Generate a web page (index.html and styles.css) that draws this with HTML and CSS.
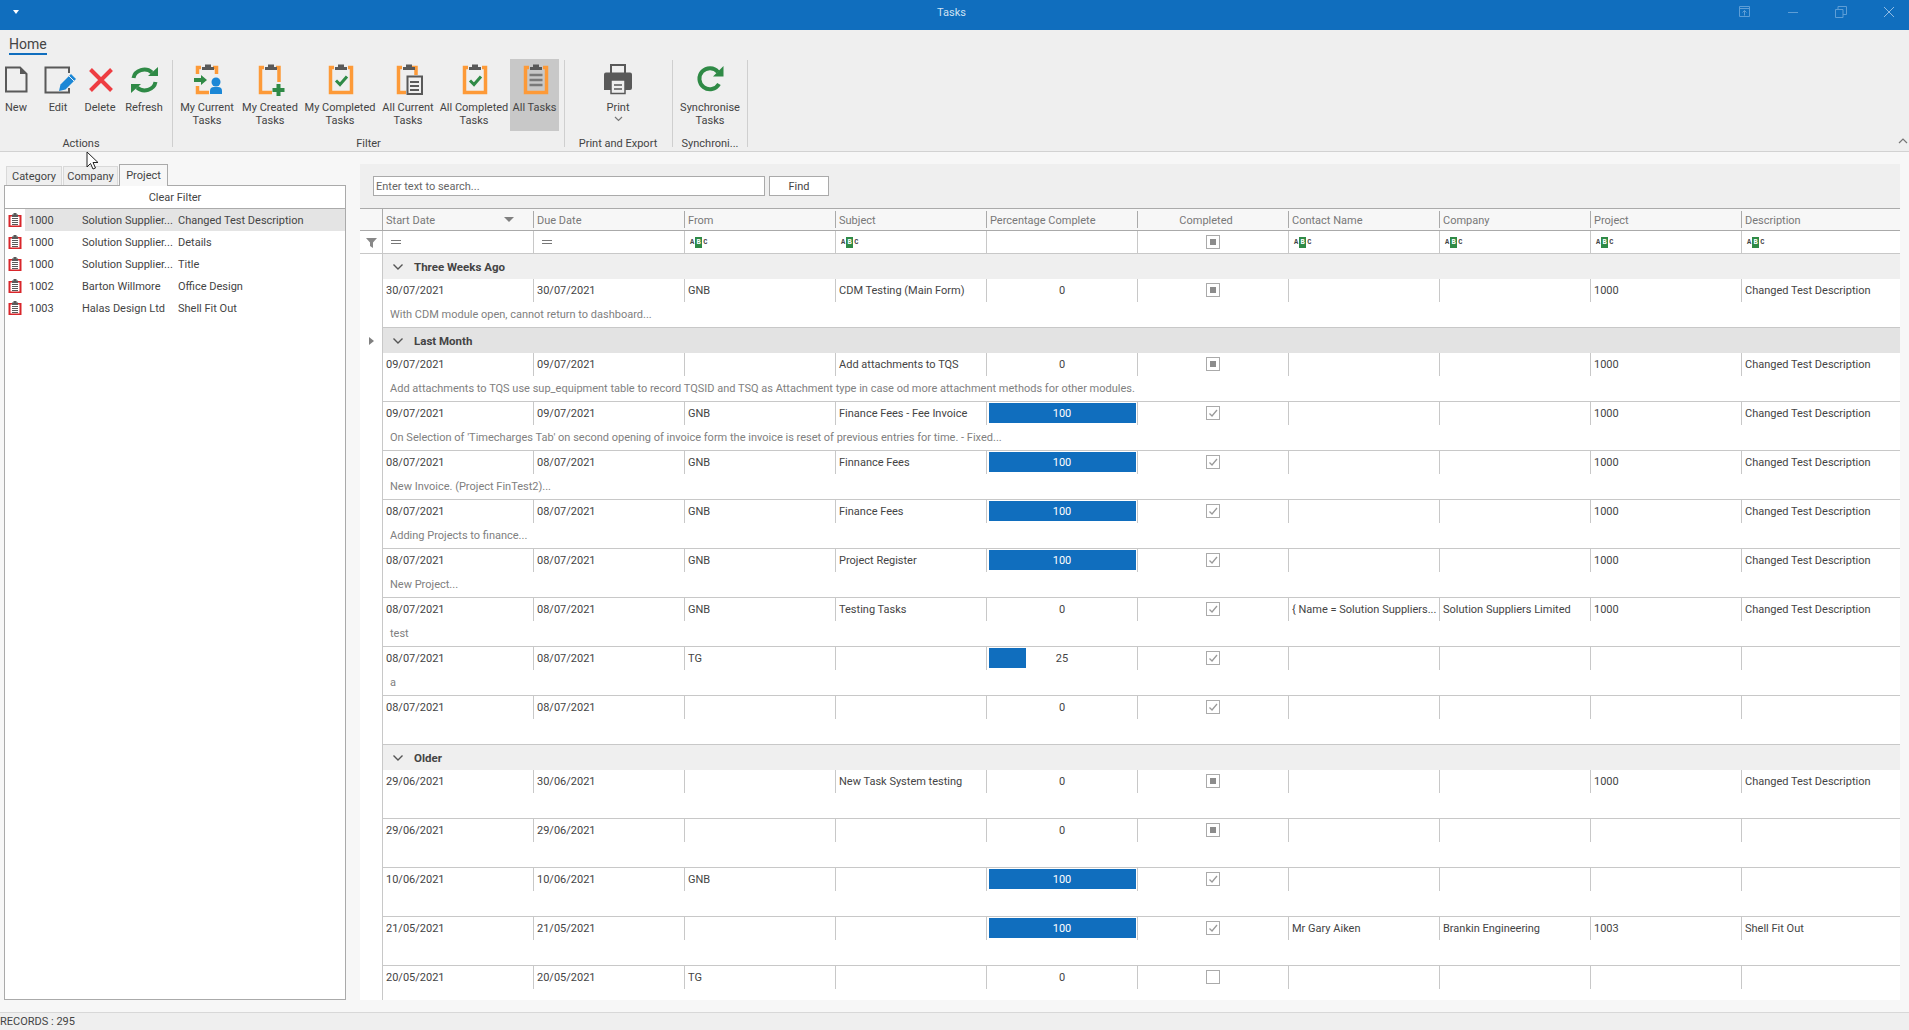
FILE: index.html
```
<!DOCTYPE html>
<html lang="en">
<head>
<meta charset="utf-8">
<title>Tasks</title>
<link rel="stylesheet" href="styles.css">
</head>
<body>
<svg class="defs" width="0" height="0">
  <symbol id="clip" viewBox="0 0 32 32"><path d="M11 7V4h3V1.500h6V4h3v3z" fill="#595959"/></symbol>
  <symbol id="mini" viewBox="0 0 16 16"><path d="M1.500 3H14.500V15H1.500Z" fill="#d9262b"/><path d="M3.500 4.500H12.500V13.500H3.500Z" fill="#fff"/><path d="M5 2.500H6.500V1H9.500V2.500H11V5H5Z" fill="#595959"/><path d="M5 6.500h6M5 8.500h6M5 10.500h6M5 12.500h6" stroke="#595959" stroke-width="1"/></symbol>
  <symbol id="chev" viewBox="0 0 12 12"><path d="M1.500 3.500 6 8 10.500 3.500" fill="none" stroke="#555" stroke-width="1.400"/></symbol>
</svg>

<header class="titlebar">
  <div class="tb-left"><span class="tb-menu"></span></div>
  <div class="tb-title">Tasks</div>
  <div class="tb-right">
    <span class="tb-btn"><svg width="12" height="12" viewBox="0 0 12 12"><path d="M.5.5h10v10H.5zM.5 2.500h10M5.500 9.500V4.500M3.500 6.500l2-2 2 2" fill="none" stroke="#5e9ed6"/></svg></span>
    <span class="tb-btn"><svg width="12" height="12" viewBox="0 0 12 12"><path d="M1 6.500h10" stroke="#5e9ed6"/></svg></span>
    <span class="tb-btn"><svg width="12" height="12" viewBox="0 0 12 12"><path d="M.5 3.500h7.500v8H.5zM3 3.500V.5h8.500v8H8" fill="none" stroke="#5e9ed6"/></svg></span>
    <span class="tb-btn"><svg width="12" height="12" viewBox="0 0 12 12"><path d="M1 1l10 10M11 1 1 11" stroke="#8fbbe4"/></svg></span>
  </div>
</header>

<section class="ribbon">
  <div class="rtabs"><span class="rtab">Home</span></div>
  <div class="rbody">
    <div class="rgroup g-actions">
      <div class="rbtns">
        <div class="rbtn"><svg width="32" height="32" viewBox="0 0 32 32"><path d="M6 4.500H20L26.500 11V28.500H6Z" fill="none" stroke="#595959" stroke-width="2"/><path d="M20 4v7h7z" fill="#595959"/></svg><span>New</span></div>
        <div class="rbtn"><svg width="32" height="32" viewBox="0 0 32 32"><path d="M27 10V4.500H3.500V29.500H27V25" fill="none" stroke="#595959" stroke-width="2"/><path d="M17 28l1.500-6.500L29 11l5 5-10.500 10.500z" fill="#1b87d6"/><path d="M27 13l5 5" stroke="#f0f0f0" stroke-width="1"/></svg><span>Edit</span></div>
        <div class="rbtn"><svg width="32" height="32" viewBox="0 0 32 32"><path d="M6.500 6.500 27.500 27.500M27.500 6.500 6.500 27.500" stroke="#ee3d42" stroke-width="4"/></svg><span>Delete</span></div>
        <div class="rbtn"><svg width="32" height="32" viewBox="0 0 32 32"><path d="M5.500 15A11 10 0 0 1 24 9.500" fill="none" stroke="#2f8a46" stroke-width="4"/><path d="M20 13h10V4z" fill="#2f8a46"/><path d="M27.500 19A11 10 0 0 1 9 24.500" fill="none" stroke="#2f8a46" stroke-width="4"/><path d="M13 21H3v9z" fill="#2f8a46"/></svg><span>Refresh</span></div>
      </div>
      <div class="rlabel">Actions</div>
    </div>
    <div class="rsep"></div>
    <div class="rgroup g-filter">
      <div class="rbtns">
        <div class="rbtn"><svg width="32" height="32" viewBox="0 0 32 32"><path d="M10 4.500H6.500V11M6.500 23V29.500H18M22 4.500H25.500V11" fill="none" stroke="#fd9a38" stroke-width="3.500"/><use href="#clip"/><path d="M3 15h7v-3l6 5-6 5v-3H3z" fill="#2f8a46"/><circle cx="25" cy="19" r="4.500" fill="#1b87d6"/><path d="M19 31v-3a4 4 0 0 1 4-4h4a4 4 0 0 1 4 4v3z" fill="#1b87d6"/></svg><span>My Current<br>Tasks</span></div>
        <div class="rbtn"><svg width="32" height="32" viewBox="0 0 32 32"><path d="M10 4.500H6.500V29.500H18M22 4.500H25V19" fill="none" stroke="#fd9a38" stroke-width="3.500"/><use href="#clip"/><path d="M22.500 21h4v4h4v4h-4v4h-4v-4h-4v-4h4z" fill="#2f8a46"/></svg><span>My Created<br>Tasks</span></div>
        <div class="rbtn"><svg width="32" height="32" viewBox="0 0 32 32"><path d="M10 4.500H6.500V29.500H27.500V4.500H24" fill="none" stroke="#fd9a38" stroke-width="3.500"/><use href="#clip"/><path d="M12 17.500l4 4 7-8" fill="none" stroke="#2f8a46" stroke-width="3"/></svg><span>My Completed<br>Tasks</span></div>
        <div class="rbtn"><svg width="32" height="32" viewBox="0 0 32 32"><path d="M10 4.500H6.500V29.500H14M20 4.500H24V12" fill="none" stroke="#fd9a38" stroke-width="3.500"/><use href="#clip"/><path d="M15.500 13.500H30V31H15.500Z" fill="#efefef" stroke="#595959" stroke-width="2"/><path d="M18 19h9M18 23h9M18 27h9" stroke="#595959" stroke-width="2"/></svg><span>All Current<br>Tasks</span></div>
        <div class="rbtn"><svg width="32" height="32" viewBox="0 0 32 32"><path d="M10 4.500H6.500V29.500H27.500V4.500H24" fill="none" stroke="#fd9a38" stroke-width="3.500"/><use href="#clip"/><path d="M12 17.500l4 4 7-8" fill="none" stroke="#2f8a46" stroke-width="3"/></svg><span>All Completed<br>Tasks</span></div>
        <div class="rbtn active"><svg width="32" height="32" viewBox="0 0 32 32"><path d="M10 4.500H6.500V29.500H27.500V4.500H24" fill="none" stroke="#fd9a38" stroke-width="3.500"/><use href="#clip"/><path d="M10.500 12h13M10.500 17h13M10.500 22h13" stroke="#7a7a7a" stroke-width="2.500"/></svg><span>All Tasks</span></div>
      </div>
      <div class="rlabel">Filter</div>
    </div>
    <div class="rsep"></div>
    <div class="rgroup g-print">
      <div class="rbtns">
        <div class="rbtn"><svg width="32" height="32" viewBox="0 0 32 32"><path d="M9 10V2h14v8" fill="none" stroke="#595959" stroke-width="2"/><path d="M4 9.500H28A2 2 0 0 1 30 11.500V25a2 2 0 0 1-2 2H2V11.500A2 2 0 0 1 4 9.500Z" fill="#595959"/><path d="M9 17H23V30.500H9Z" fill="#efefef" stroke="#595959" stroke-width="1.500"/><path d="M12 22h8M12 26h8" stroke="#595959" stroke-width="1.500"/></svg><span>Print</span><svg class="dd" width="9" height="6" viewBox="0 0 9 6"><path d="M1 1l3.500 3.500L8 1" fill="none" stroke="#777" stroke-width="1.200"/></svg></div>
      </div>
      <div class="rlabel">Print and Export</div>
    </div>
    <div class="rsep"></div>
    <div class="rgroup g-sync">
      <div class="rbtns">
        <div class="rbtn"><svg width="32" height="32" viewBox="0 0 32 32"><path d="M25 21A10.500 10.500 0 1 1 24 9" fill="none" stroke="#2f8a46" stroke-width="4"/><path d="M19 13.500H29.500V3z" fill="#2f8a46"/></svg><span>Synchronise<br>Tasks</span></div>
      </div>
      <div class="rlabel">Synchroni...</div>
    </div>
    <div class="rsep"></div>
    <svg class="rcollapse" width="10" height="6" viewBox="0 0 10 6"><path d="M1 5l4-4 4 4" fill="none" stroke="#777" stroke-width="1.200"/></svg>
  </div>
</section>

<main class="content">
  <aside class="side">
    <div class="stabs">
      <span class="stab t-cat">Category</span>
      <span class="stab t-com">Company</span>
      <span class="stab on">Project</span>
    </div>
    <div class="spanel">
      <div class="clear">Clear Filter</div>
      <div class="srow sel"><svg width="16" height="16"><use href="#mini"/></svg><span class="s-id">1000</span><span class="s-name">Solution Supplier...</span><span class="s-desc">Changed Test Description</span></div>
      <div class="srow"><svg width="16" height="16"><use href="#mini"/></svg><span class="s-id">1000</span><span class="s-name">Solution Supplier...</span><span class="s-desc">Details</span></div>
      <div class="srow"><svg width="16" height="16"><use href="#mini"/></svg><span class="s-id">1000</span><span class="s-name">Solution Supplier...</span><span class="s-desc">Title</span></div>
      <div class="srow"><svg width="16" height="16"><use href="#mini"/></svg><span class="s-id">1002</span><span class="s-name">Barton Willmore</span><span class="s-desc">Office Design</span></div>
      <div class="srow"><svg width="16" height="16"><use href="#mini"/></svg><span class="s-id">1003</span><span class="s-name">Halas Design Ltd</span><span class="s-desc">Shell Fit Out</span></div>
    </div>
  </aside>

  <section class="gridwrap">
    <div class="search">
      <div class="sinput">Enter text to search...</div>
      <div class="sfind">Find</div>
    </div>
    <div class="grid">
      <div class="ghead">
        <div class="gut"></div>
        <div class="hc sorted">Start Date<span class="sort"></span></div>
        <div class="hc">Due Date</div>
        <div class="hc">From</div>
        <div class="hc">Subject</div>
        <div class="hc">Percentage Complete</div>
        <div class="hc mid">Completed</div>
        <div class="hc">Contact Name</div>
        <div class="hc">Company</div>
        <div class="hc">Project</div>
        <div class="hc last">Description</div>
      </div>
      <div class="gfilter">
        <div class="gut"><svg width="11" height="11" viewBox="0 0 11 11"><path d="M0 1h11L7 5.500V11L4 9V5.500z" fill="#888"/></svg></div>
        <div class="fc"><span class="eq"></span></div>
        <div class="fc"><span class="eq"></span></div>
        <div class="fc"><span class="abc">A<b>B</b>C</span></div>
        <div class="fc"><span class="abc">A<b>B</b>C</span></div>
        <div class="fc"></div>
        <div class="fc mid"><span class="cb ind"></span></div>
        <div class="fc"><span class="abc">A<b>B</b>C</span></div>
        <div class="fc"><span class="abc">A<b>B</b>C</span></div>
        <div class="fc"><span class="abc">A<b>B</b>C</span></div>
        <div class="fc last"><span class="abc">A<b>B</b>C</span></div>
      </div>

      <div class="gbody">
        <div class="grp"><div class="gut"></div><div class="grp-in"><svg width="12" height="12"><use href="#chev"/></svg>Three Weeks Ago</div></div>
        <div class="row">
          <div class="gut"></div>
          <div class="c">30/07/2021</div><div class="c">30/07/2021</div><div class="c">GNB</div><div class="c">CDM Testing (Main Form)</div>
          <div class="c pct"><span class="n">0</span></div><div class="c mid"><span class="cb ind"></span></div>
          <div class="c"></div><div class="c"></div><div class="c">1000</div><div class="c last">Changed Test Description</div>
          <div class="pv">With CDM module open, cannot return to dashboard...</div>
        </div>

        <div class="grp cur"><div class="gut"><span class="ind-tri"></span></div><div class="grp-in"><svg width="12" height="12"><use href="#chev"/></svg>Last Month</div></div>
        <div class="row">
          <div class="gut"></div>
          <div class="c">09/07/2021</div><div class="c">09/07/2021</div><div class="c"></div><div class="c">Add attachments to TQS</div>
          <div class="c pct"><span class="n">0</span></div><div class="c mid"><span class="cb ind"></span></div>
          <div class="c"></div><div class="c"></div><div class="c">1000</div><div class="c last">Changed Test Description</div>
          <div class="pv">Add attachments to TQS use sup_equipment table to record TQSID and TSQ as Attachment type in case od more attachment methods for other modules.</div>
        </div>
        <div class="row">
          <div class="gut"></div>
          <div class="c">09/07/2021</div><div class="c">09/07/2021</div><div class="c">GNB</div><div class="c">Finance Fees - Fee Invoice</div>
          <div class="c pct"><span class="fill" style="width:100%"></span><span class="n w">100</span></div><div class="c mid"><span class="cb chk"></span></div>
          <div class="c"></div><div class="c"></div><div class="c">1000</div><div class="c last">Changed Test Description</div>
          <div class="pv">On Selection of 'Timecharges Tab' on second opening of invoice form the invoice is reset of previous entries for time. - Fixed...</div>
        </div>
        <div class="row">
          <div class="gut"></div>
          <div class="c">08/07/2021</div><div class="c">08/07/2021</div><div class="c">GNB</div><div class="c">Finnance Fees</div>
          <div class="c pct"><span class="fill" style="width:100%"></span><span class="n w">100</span></div><div class="c mid"><span class="cb chk"></span></div>
          <div class="c"></div><div class="c"></div><div class="c">1000</div><div class="c last">Changed Test Description</div>
          <div class="pv">New Invoice. (Project FinTest2)...</div>
        </div>
        <div class="row">
          <div class="gut"></div>
          <div class="c">08/07/2021</div><div class="c">08/07/2021</div><div class="c">GNB</div><div class="c">Finance Fees</div>
          <div class="c pct"><span class="fill" style="width:100%"></span><span class="n w">100</span></div><div class="c mid"><span class="cb chk"></span></div>
          <div class="c"></div><div class="c"></div><div class="c">1000</div><div class="c last">Changed Test Description</div>
          <div class="pv">Adding Projects to finance...</div>
        </div>
        <div class="row">
          <div class="gut"></div>
          <div class="c">08/07/2021</div><div class="c">08/07/2021</div><div class="c">GNB</div><div class="c">Project Register</div>
          <div class="c pct"><span class="fill" style="width:100%"></span><span class="n w">100</span></div><div class="c mid"><span class="cb chk"></span></div>
          <div class="c"></div><div class="c"></div><div class="c">1000</div><div class="c last">Changed Test Description</div>
          <div class="pv">New Project...</div>
        </div>
        <div class="row">
          <div class="gut"></div>
          <div class="c">08/07/2021</div><div class="c">08/07/2021</div><div class="c">GNB</div><div class="c">Testing Tasks</div>
          <div class="c pct"><span class="n">0</span></div><div class="c mid"><span class="cb chk"></span></div>
          <div class="c">{ Name = Solution Suppliers...</div><div class="c">Solution Suppliers Limited</div><div class="c">1000</div><div class="c last">Changed Test Description</div>
          <div class="pv">test</div>
        </div>
        <div class="row">
          <div class="gut"></div>
          <div class="c">08/07/2021</div><div class="c">08/07/2021</div><div class="c">TG</div><div class="c"></div>
          <div class="c pct"><span class="fill" style="width:25%"></span><span class="n">25</span></div><div class="c mid"><span class="cb chk"></span></div>
          <div class="c"></div><div class="c"></div><div class="c"></div><div class="c last"></div>
          <div class="pv">a</div>
        </div>
        <div class="row">
          <div class="gut"></div>
          <div class="c">08/07/2021</div><div class="c">08/07/2021</div><div class="c"></div><div class="c"></div>
          <div class="c pct"><span class="n">0</span></div><div class="c mid"><span class="cb chk"></span></div>
          <div class="c"></div><div class="c"></div><div class="c"></div><div class="c last"></div>
          <div class="pv"></div>
        </div>

        <div class="grp"><div class="gut"></div><div class="grp-in"><svg width="12" height="12"><use href="#chev"/></svg>Older</div></div>
        <div class="row">
          <div class="gut"></div>
          <div class="c">29/06/2021</div><div class="c">30/06/2021</div><div class="c"></div><div class="c">New Task System testing</div>
          <div class="c pct"><span class="n">0</span></div><div class="c mid"><span class="cb ind"></span></div>
          <div class="c"></div><div class="c"></div><div class="c">1000</div><div class="c last">Changed Test Description</div>
          <div class="pv"></div>
        </div>
        <div class="row">
          <div class="gut"></div>
          <div class="c">29/06/2021</div><div class="c">29/06/2021</div><div class="c"></div><div class="c"></div>
          <div class="c pct"><span class="n">0</span></div><div class="c mid"><span class="cb ind"></span></div>
          <div class="c"></div><div class="c"></div><div class="c"></div><div class="c last"></div>
          <div class="pv"></div>
        </div>
        <div class="row">
          <div class="gut"></div>
          <div class="c">10/06/2021</div><div class="c">10/06/2021</div><div class="c">GNB</div><div class="c"></div>
          <div class="c pct"><span class="fill" style="width:100%"></span><span class="n w">100</span></div><div class="c mid"><span class="cb chk"></span></div>
          <div class="c"></div><div class="c"></div><div class="c"></div><div class="c last"></div>
          <div class="pv"></div>
        </div>
        <div class="row">
          <div class="gut"></div>
          <div class="c">21/05/2021</div><div class="c">21/05/2021</div><div class="c"></div><div class="c"></div>
          <div class="c pct"><span class="fill" style="width:100%"></span><span class="n w">100</span></div><div class="c mid"><span class="cb chk"></span></div>
          <div class="c">Mr Gary Aiken</div><div class="c">Brankin Engineering</div><div class="c">1003</div><div class="c last">Shell Fit Out</div>
          <div class="pv"></div>
        </div>
        <div class="row">
          <div class="gut"></div>
          <div class="c">20/05/2021</div><div class="c">20/05/2021</div><div class="c">TG</div><div class="c"></div>
          <div class="c pct"><span class="n">0</span></div><div class="c mid"><span class="cb"></span></div>
          <div class="c"></div><div class="c"></div><div class="c"></div><div class="c last"></div>
          <div class="pv"></div>
        </div>
      </div>
    </div>
  </section>
</main>

<footer class="status">RECORDS : 295</footer>

<svg class="cursor" width="14" height="20" viewBox="0 0 14 20"><path d="M1 1v15l3.500-3.500L7 18l2.500-1-2.500-5.500h5z" fill="#fff" stroke="#222"/></svg>
</body>
</html>
```

FILE: styles.css
```
* { box-sizing: border-box; }
html, body { margin: 0; padding: 0; height: 100%; overflow: hidden; }
body {
  width: 1909px;
  height: 1030px;
  display: flex;
  flex-direction: column;
  background: #f7f7f7;
  color: #444;
  font: 11px/16px Roboto, "Noto Sans", sans-serif;
}
.defs { display: block; width: 0; height: 0; }

/* title bar */
.titlebar {
  flex: 0 0 30px;
  display: grid;
  grid-template-columns: 1fr auto 1fr;
  background: #106ebe;
  color: #cfe2f3;
}
.tb-left { display: flex; align-items: center; padding: 0 0 6px 13px; }
.tb-menu { width: 0; height: 0; border: 3px solid transparent; border-top: 4px solid #fff; border-bottom: 0; }
.tb-title { line-height: 26px; padding-right: 6px; }
.tb-right { display: flex; justify-content: flex-end; margin-right: -4px; }
.tb-btn { width: 48px; height: 24px; display: flex; align-items: center; justify-content: center; }

/* ribbon */
.ribbon { flex: 0 0 122px; background: #efefef; border-bottom: 1px solid #d2d2d2; }
.rtabs { height: 29px; padding: 6px 0 0 9px; }
.rtab { display: inline-block; height: 19px; font-size: 14px; line-height: 17px; border-bottom: 2px solid #106ebe; color: #444; }
.rbody { display: flex; align-items: flex-start; height: 92px; }
.rgroup { display: flex; flex-direction: column; }
.rbtns { display: grid; height: 72px; }
.g-actions { width: 172px; }
.g-actions .rbtns { grid-template-columns: 32px 52px 32px 56px; }
.g-actions .rlabel { padding-right: 10px; }
.g-filter { width: 391px; }
.g-filter .rbtns { padding-left: 3px; grid-template-columns: 62px 64px 76px 60px 72px 49px; }
.g-print { width: 107px; }
.g-print .rbtns { padding-right: 1px; grid-template-columns: 1fr; }
.g-print .rlabel { padding-right: 1px; }
.g-sync { width: 74px; }
.g-sync .rbtns { grid-template-columns: 1fr; }
.rbtn {
  display: flex;
  flex-direction: column;
  align-items: center;
  padding-top: 4px;
  text-align: center;
  line-height: 13px;
  white-space: nowrap;
  min-width: 0;
}
.rbtn > span { margin-top: 6px; }
.rbtn.active { background: #c8c8c8; }
.rbtn svg { flex: none; overflow: visible; }
.rbtn .dd { margin-top: 2px; }
.rlabel { padding-top: 5px; height: 20px; text-align: center; white-space: nowrap; line-height: 16px; }
.rsep { flex: none; width: 1px; height: 87px; margin: 1px 0 0; background: #cfcfcf; }
.rcollapse { margin: 79px 1px 0 auto; flex: none; }

/* content */
.content {
  flex: 1;
  min-height: 0;
  display: flex;
  gap: 14px;
  padding: 12px 9px 12px 4px;
}
.side { flex: 0 0 342px; display: flex; flex-direction: column; }
.stabs { flex: 0 0 21px; display: flex; padding-left: 2px; align-items: flex-end; position: relative; z-index: 1; }
.stab {
  height: 19px;
  margin-right: 1px;
  background: #efefef;
  border: 1px solid #d9d9d9;
  border-bottom: 0;
  text-align: center;
  line-height: 19px;
}
.t-cat { width: 56px; }
.t-com { width: 55px; }
.stab.on { width: 49px; height: 22px; margin-bottom: -1px; background: #f7f7f7; border-color: #aaa; line-height: 21px; }
.spanel { flex: 1; background: #fff; border: 1px solid #aaa; }
.clear { height: 23px; border-bottom: 1px solid #aaa; text-align: center; line-height: 24px; }
.srow { height: 22px; display: flex; align-items: center; padding-left: 2px; line-height: 18px; }
.srow svg { flex: none; }
.srow span { padding-top: 2px; }
.srow.sel { background: linear-gradient(to right, #fff 20px, #e4e4e4 20px); }
.s-id { width: 59px; padding-left: 6px; }
.s-name { width: 96px; white-space: nowrap; overflow: hidden; }
.s-desc { white-space: nowrap; }

.gridwrap { flex: 1; min-width: 0; display: flex; flex-direction: column; }
.search { flex: 0 0 44px; background: #efefef; display: flex; gap: 4px; padding: 12px 0 0 13px; }
.sinput { width: 392px; height: 20px; background: #fff; border: 1px solid #aaa; padding-left: 2px; line-height: 19px; color: #666; }
.sfind { width: 60px; height: 20px; background: #fff; border: 1px solid #aaa; text-align: center; line-height: 19px; }

.grid { flex: 1; min-height: 0; display: flex; flex-direction: column; background: #fff; }
.ghead, .gfilter, .row { display: grid; grid-template-columns: 23px repeat(9, 151px) 1fr; }
.gut { border-right: 1px solid #c8c8c8; }
.ghead { flex: 0 0 23px; background: #f7f7f7; border-top: 1px solid #aaa; border-bottom: 1px solid #aaa; color: #777; }
.ghead .gut { border-right-color: #aaa; }
.hc { height: 17px; margin: 2px 0; padding-left: 3px; line-height: 19px; border-right: 1px solid #aaa; white-space: nowrap; display: flex; }
.hc.mid { justify-content: center; padding: 0 14px 0 0; }
.hc.last, .fc.last, .c.last { border-right: 0; }
.sort { width: 0; height: 0; margin: 6px 19px 0 auto; border: 5px solid transparent; border-top: 5px solid #808080; border-bottom: 0; }
.gfilter { flex: 0 0 23px; border-bottom: 1px solid #c8c8c8; }
.gfilter .gut { display: flex; align-items: center; justify-content: center; }
.fc { border-right: 1px solid #c8c8c8; padding-left: 5px; display: flex; align-items: center; }
.fc.mid { justify-content: center; padding: 0; }
.eq { display: block; width: 10px; height: 4px; margin-left: 3px; border-top: 1px solid #777; border-bottom: 1px solid #777; }
.abc { font: 700 7px/9px "Liberation Mono", monospace; color: #444; display: inline-flex; align-items: center; }
.abc b { display: block; width: 7px; height: 11px; margin: 0 1px; background: #2f8a46; color: #fff; text-align: center; line-height: 11px; }

.gbody { flex: 1; min-height: 0; overflow: hidden; }
.grp { height: 25px; display: grid; grid-template-columns: 23px 1fr; }
.grp .gut { display: flex; align-items: center; justify-content: center; }
.grp-in { background: #efefef; display: flex; align-items: center; padding-left: 9px; font-weight: 700; font-size: 11.500px; }
.grp-in svg { margin-right: 10px; }
.grp.cur .grp-in { background: #e3e3e3; }
.ind-tri { width: 0; height: 0; border: 4px solid transparent; border-left: 5px solid #808080; border-right: 0; }
.row { height: 49px; grid-template-rows: 23px 26px; }
.row .gut { grid-row: 1 / 3; }
.c { height: 23px; padding: 0 0 0 3px; line-height: 24px; border-right: 1px solid #c8c8c8; white-space: nowrap; overflow: hidden; }
.c.mid { padding: 0 0 1px; display: flex; align-items: center; justify-content: center; }
.pct { display: grid; padding: 1px 1px 2px 2px; }
.pct > * { grid-area: 1 / 1; }
.fill { height: 20px; background: #106ebe; }
.n { text-align: center; line-height: 22px; padding-right: 1px; }
.n.w { color: #fff; }
.pv { grid-column: 2 / -1; padding-left: 7px; line-height: 26px; height: 26px; border-bottom: 1px solid #c8c8c8; color: #808080; white-space: nowrap; }

.cb { display: block; flex: none; width: 14px; height: 14px; border: 1px solid #aaa; background: #fff; }
.cb.ind { background: linear-gradient(#8c8c8c, #8c8c8c) center / 6px 6px no-repeat #fff; }
.cb.chk {
  background: no-repeat center / 10px 10px #fff url("data:image/svg+xml,%3Csvg xmlns='http://www.w3.org/2000/svg' viewBox='0 0 10 10'%3E%3Cpath d='M1.500 5.500 4 8 9 2' fill='none' stroke='%23999' stroke-width='1.300'/%3E%3C/svg%3E");
}

.status { flex: 0 0 18px; background: #efefef; border-top: 1px solid #d8d8d8; padding-top: 1px; line-height: 16px; white-space: nowrap; }
.cursor { position: absolute; left: 86px; top: 151px; z-index: 5; }
```
